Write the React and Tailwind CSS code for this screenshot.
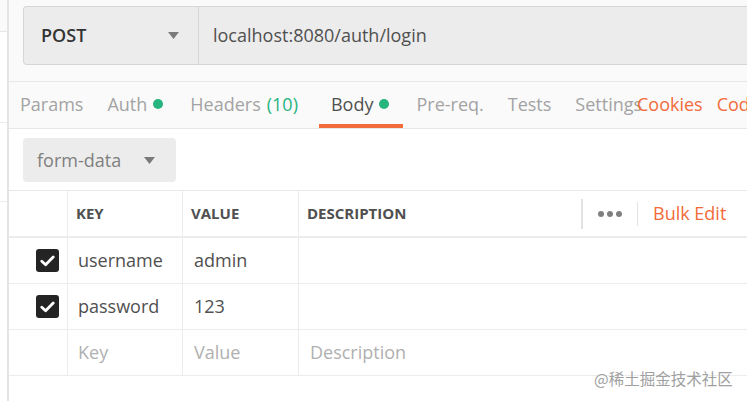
import React from "react";

const Caret = ({ className = "" }) => (
  <svg width="11" height="7" viewBox="0 0 11 7" className={className}>
    <path d="M0 0 H11 L5.5 7 Z" fill="#7a7a7a" />
  </svg>
);

const Dot = () => <span className="inline-block w-[10px] h-[10px] rounded-full bg-[#26b47f]" />;

const Check = () => (
  <span className="w-[23px] h-[23px] rounded-[3px] bg-[#242424] flex items-center justify-center">
    <svg width="15" height="12" viewBox="0 0 15 12">
      <path d="M1.8 6.2 L5.6 9.8 L13.2 2" fill="none" stroke="#fff" strokeWidth="2.8" strokeLinecap="round" strokeLinejoin="round" />
    </svg>
  </span>
);

const tabs = [
  { label: "Params", space: "mr-0" },
  { label: "Auth", dot: true, space: "mr-[3px]" },
  { label: "Headers", count: "(10)", space: "mr-[9px]" },
  { label: "Body", dot: true, active: true, space: "mr-[3px]" },
  { label: "Pre-req.", space: "mr-0" },
  { label: "Tests", space: "mr-0" },
  { label: "Settings", space: "mr-0" },
];

const rows = [
  { key: "username", value: "admin", checked: true },
  { key: "password", value: "123", checked: true },
];

export default function App() {
  return (
    <div className="relative flex w-[747px] h-[401px] overflow-hidden bg-white font-['Open_Sans',sans-serif] text-[18px]">
      {/* sidebar edge behind */}
      <div className="w-[7px] flex flex-col bg-white">
        <div className="h-[32px] bg-[#fafafa] border-b border-[#e6e6e6]" />
        <div className="h-[91px] border-b border-[#ececec]" />
        <div className="h-[79px] border-b border-[#ececec]" />
      </div>
      <div className="w-[2px] bg-[#e4e4e4]" />

      <div className="flex-1 min-w-0 flex flex-col">
        {/* request bar */}
        <div className="h-[81px] bg-[#fafafa] pl-[14px] pt-[6px]">
          <div className="flex h-[59px] bg-[#ececec] border border-r-0 border-[#d6d6d6] rounded-l-[4px]">
            <div className="w-[175px] flex items-center justify-between pl-[17px] pr-[19px] border-r border-[#d6d6d6]">
              <span className="font-semibold text-[#333]">POST</span>
              <Caret />
            </div>
            <div className="flex items-center pl-[14px] text-[#505050]">localhost:8080/auth/login</div>
          </div>
        </div>

        {/* tabs */}
        <div className="relative h-[48px] bg-[#fafafa] border-y border-[#e8e8e8] flex items-center pl-[11px] gap-[24px] whitespace-nowrap">
          {tabs.map((t) => (
            <div key={t.label} className={`relative h-full flex items-center gap-[6px] pb-[2px] ${t.space}`}>
              <span className={t.active ? "text-[#505050]" : "text-[#a3a3a3]"}>{t.label}</span>
              {t.count && <span className="text-[#26b47f]">{t.count}</span>}
              {t.dot && <Dot />}
              {t.active && <span className="absolute -left-[12px] -right-[14px] bottom-0 h-[4px] bg-[#f26b3a]" />}
            </div>
          ))}
          <div className="absolute left-[628px] top-0 h-full flex items-center gap-[14px] pb-[2px] text-[#f26b3a]">
            <span>Cookies</span>
            <span>Code</span>
          </div>
        </div>

        {/* body */}
        <div className="flex-1 bg-white">
          <div className="pl-[14px] pt-[9px] pb-[8px]">
            <div className="w-[153px] h-[44px] bg-[#ececec] rounded-[4px] flex items-center justify-between pl-[14px] pr-[21px]">
              <span className="text-[#808080]">form-data</span>
              <Caret />
            </div>
          </div>

          <div className="border-t border-[#e8e8e8]">
            {/* header */}
            <div className="flex h-[47px] border-b-2 border-[#ececec] text-[15px] font-bold text-[#505050]">
              <div className="w-[59px] border-r border-[#ececec]" />
              <div className="w-[115px] border-r border-[#ececec] flex items-center pl-[8px]">KEY</div>
              <div className="w-[116px] border-r border-[#ececec] flex items-center pl-[8px]">VALUE</div>
              <div className="flex-1 flex items-center pl-[8px]">
                <span className="w-[274px]">DESCRIPTION</span>
                <span className="w-[1.5px] h-[30px] bg-[#e2e2e2]" />
                <span className="flex gap-[3px] px-[15px]">
                  <span className="w-[6px] h-[6px] rounded-full bg-[#808080]" />
                  <span className="w-[6px] h-[6px] rounded-full bg-[#808080]" />
                  <span className="w-[6px] h-[6px] rounded-full bg-[#808080]" />
                </span>
                <span className="w-[1.5px] h-[24px] bg-[#e2e2e2]" />
                <span className="pl-[15px] font-normal text-[18px] text-[#f26b3a] whitespace-nowrap">Bulk Edit</span>
              </div>
            </div>

            {rows.map((r) => (
              <div key={r.key} className="flex h-[46px] border-b border-[#ececec] text-[#505050]">
                <div className="w-[59px] border-r border-[#ececec] flex items-center justify-end pr-[8px]">
                  <Check />
                </div>
                <div className="w-[115px] border-r border-[#ececec] flex items-center pl-[10px]">{r.key}</div>
                <div className="w-[116px] border-r border-[#ececec] flex items-center pl-[11px]">{r.value}</div>
                <div className="flex-1" />
              </div>
            ))}

            <div className="flex h-[46px] border-b border-[#ececec] text-[#b0b0b0]">
              <div className="w-[59px] border-r border-[#ececec]" />
              <div className="w-[115px] border-r border-[#ececec] flex items-center pl-[10px]">Key</div>
              <div className="w-[116px] border-r border-[#ececec] flex items-center pl-[11px]">Value</div>
              <div className="flex-1 flex items-center pl-[11px]">Description</div>
            </div>
          </div>
        </div>
      </div>

      <span className="absolute left-[594px] top-[367px] text-[15.5px] text-[#a0a0a0] font-['Noto_Sans_CJK_SC',sans-serif]">
        @稀土掘金技术社区
      </span>
    </div>
  );
}
